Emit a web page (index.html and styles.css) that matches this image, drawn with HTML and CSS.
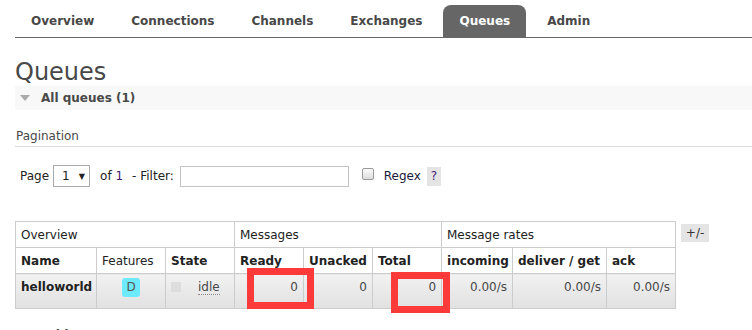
FILE: index.html
```html
<!DOCTYPE html>
<html lang="en">
<head>
    <meta charset="UTF-8">
    <title>RabbitMQ Management</title>
    <link rel="stylesheet" href="styles.css">
</head>
<body>
    <div class="menu">
        <ul class="tabs">
            <li><a>Overview</a></li>
            <li><a>Connections</a></li>
            <li><a>Channels</a></li>
            <li><a>Exchanges</a></li>
            <li class="active"><a>Queues</a></li>
            <li><a>Admin</a></li>
        </ul>
    </div>

    <div class="main">
        <h1>Queues</h1>

        <div class="section">
            <h2 class="section-title"><span class="arrow-down"></span>All queues (1)</h2>

            <h3 class="pagination-title">Pagination</h3>

            <div class="filter-row">
                <span class="label-page">Page</span>
                <span class="fake-select"><span>1</span><span class="caret">&#9660;</span></span>
                <span class="label-of">of <span class="page-count">1</span></span>
                <span class="label-filter">- Filter:</span>
                <input class="filter-input" type="text">
                <span class="fake-check"></span>
                <span class="label-regex">Regex</span>
                <span class="help">?</span>
            </div>

            <div class="table-wrap">
                <table class="list">
                    <colgroup>
                        <col style="width: 81px">
                        <col style="width: 69px">
                        <col style="width: 69px">
                        <col style="width: 69px">
                        <col style="width: 69px">
                        <col style="width: 69px">
                        <col style="width: 71px">
                        <col style="width: 94px">
                        <col style="width: 69px">
                    </colgroup>
                    <thead>
                        <tr class="group-row">
                            <th colspan="3">Overview</th>
                            <th colspan="3">Messages</th>
                            <th colspan="3">Message rates</th>
                        </tr>
                        <tr class="col-row">
                            <th>Name</th>
                            <th class="plain">Features</th>
                            <th>State</th>
                            <th>Ready</th>
                            <th>Unacked</th>
                            <th>Total</th>
                            <th>incoming</th>
                            <th>deliver / get</th>
                            <th>ack</th>
                        </tr>
                    </thead>
                    <tbody>
                        <tr class="data-row">
                            <td class="name">helloworld</td>
                            <td class="center"><abbr class="badge">D</abbr></td>
                            <td><span class="state-box"></span><abbr class="state">idle</abbr></td>
                            <td class="num">0</td>
                            <td class="num">0</td>
                            <td class="num">0</td>
                            <td class="num">0.00/s</td>
                            <td class="num">0.00/s</td>
                            <td class="num">0.00/s</td>
                        </tr>
                    </tbody>
                </table>
                <span class="toggle-cols">+/-</span>

                <div class="mark mark-ready"></div>
                <div class="mark mark-total"></div>
            </div>
        </div>

        <h2 class="section-title collapsed"><span class="arrow-right"></span>Add a new queue</h2>
    </div>
</body>
</html>
```

FILE: styles.css
```css
body {
    margin: 0;
    padding: 0;
    font-family: 'DejaVu Sans', Verdana, sans-serif;
    font-size: 12px;
    color: #484848;
    background-color: #fff;
    overflow: hidden;
}

.menu {
    padding-left: 15px;
}

.tabs {
    list-style: none;
    margin: 0;
    padding: 5px 0 0 0;
    display: flex;
    gap: 5px;
    border-bottom: 1px solid #666;
}

.tabs li a {
    display: block;
    padding: 0 16px;
    height: 32px;
    line-height: 32px;
    font-weight: bold;
    color: #484848;
    border-radius: 8px 8px 0 0;
}

.tabs li.active a {
    background-color: #666;
    color: #fff;
}

.main {
    padding-left: 15px;
}

h1 {
    margin: 21px 0 1px;
    font-size: 24px;
    font-weight: normal;
    line-height: 26px;
    color: #484848;
}

.section-title {
    margin: 0;
    height: 24px;
    line-height: 24px;
    font-size: 12px;
    font-weight: bold;
    background-color: #f8f8f8;
    padding-left: 5px;
    display: flex;
    align-items: center;
}

.arrow-down {
    width: 0;
    height: 0;
    border-left: 5px solid transparent;
    border-right: 5px solid transparent;
    border-top: 6px solid #aaa;
    margin-right: 11px;
}

.section-title.collapsed {
    margin-top: 14px;
    background-color: transparent;
    padding-left: 10px;
}

.arrow-right {
    width: 0;
    height: 0;
    border-top: 5px solid transparent;
    border-bottom: 5px solid transparent;
    border-left: 6px solid #aaa;
    margin-right: 11px;
}

.pagination-title {
    margin: 16px 0 0;
    font-size: 12px;
    font-weight: normal;
    line-height: 20px;
    padding-left: 1px;
    border-bottom: 1px solid #ddd;
}

.filter-row {
    margin-top: 18px;
    height: 22px;
    display: flex;
    align-items: center;
    padding-left: 5px;
    color: #222;
}

.fake-select {
    margin-left: 4px;
    width: 37px;
    height: 22px;
    box-sizing: border-box;
    border: 1px solid #a9a9a9;
    display: flex;
    align-items: center;
    padding-left: 8px;
    gap: 9px;
}

.fake-select .caret {
    font-size: 8px;
}

.label-of {
    margin-left: 10px;
}

.page-count {
    color: #3b1a6b;
}

.label-filter {
    margin-left: 9px;
}

.filter-input {
    margin: 0 0 0 6px;
    width: 169px;
    height: 21px;
    box-sizing: border-box;
    border: 1px solid #c4c4c4;
    padding: 0 3px;
    font-family: inherit;
    font-size: 12px;
}

.fake-check {
    margin-left: 13px;
    width: 12px;
    height: 12px;
    box-sizing: border-box;
    border: 1px solid #999;
    border-radius: 2px;
    background: linear-gradient(#fbfbfb, #dcdcdc);
    margin-top: -4px;
}

.label-regex {
    margin-left: 10px;
    color: #1a1a3a;
}

.help {
    margin-left: 6px;
    width: 14px;
    height: 19px;
    line-height: 19px;
    text-align: center;
    background-color: #e4e4e4;
    color: #4b1a7a;
}

.table-wrap {
    position: relative;
    margin-top: 34px;
    display: flex;
    align-items: flex-start;
}

.list {
    border-collapse: collapse;
    table-layout: fixed;
    width: 660px;
    color: #222;
}

.list th,
.list td {
    border: 1px solid #ccc;
    padding: 0 5px;
    white-space: nowrap;
    text-align: left;
}

.list th {
    font-weight: bold;
}

.group-row th {
    height: 25px;
    font-weight: normal;
}

.col-row th {
    height: 25px;
}

.col-row th.plain {
    font-weight: normal;
}

.data-row td {
    height: 26px;
    padding-bottom: 8px;
    background: linear-gradient(#f2f2f2, #e1e1e1);
    color: #484848;
}

.data-row td.name {
    font-weight: bold;
    color: #222;
}

.center {
    text-align: center !important;
}

.num {
    text-align: right !important;
}

.badge {
    display: inline-block;
    width: 18px;
    height: 19px;
    line-height: 19px;
    text-align: center;
    border-radius: 3px;
    background-color: #6eeaff;
    color: #555;
    text-decoration: none;
}

.state-box {
    display: inline-block;
    width: 10px;
    height: 10px;
    background-color: #ddd;
    vertical-align: -1px;
    margin-right: 17px;
}

.state {
    text-decoration: none;
    border-bottom: 1px dotted #888;
}

.toggle-cols {
    margin: 3px 0 0 5px;
    width: 28px;
    height: 18px;
    line-height: 18px;
    text-align: center;
    background-color: #e4e4e4;
    color: #333;
}

.mark {
    position: absolute;
    box-sizing: border-box;
    border: 7px solid #fd3a3a;
}

.mark-ready {
    left: 232px;
    top: 47px;
    width: 67px;
    height: 41px;
}

.mark-total {
    left: 376px;
    top: 51px;
    width: 59px;
    height: 41px;
}
```
